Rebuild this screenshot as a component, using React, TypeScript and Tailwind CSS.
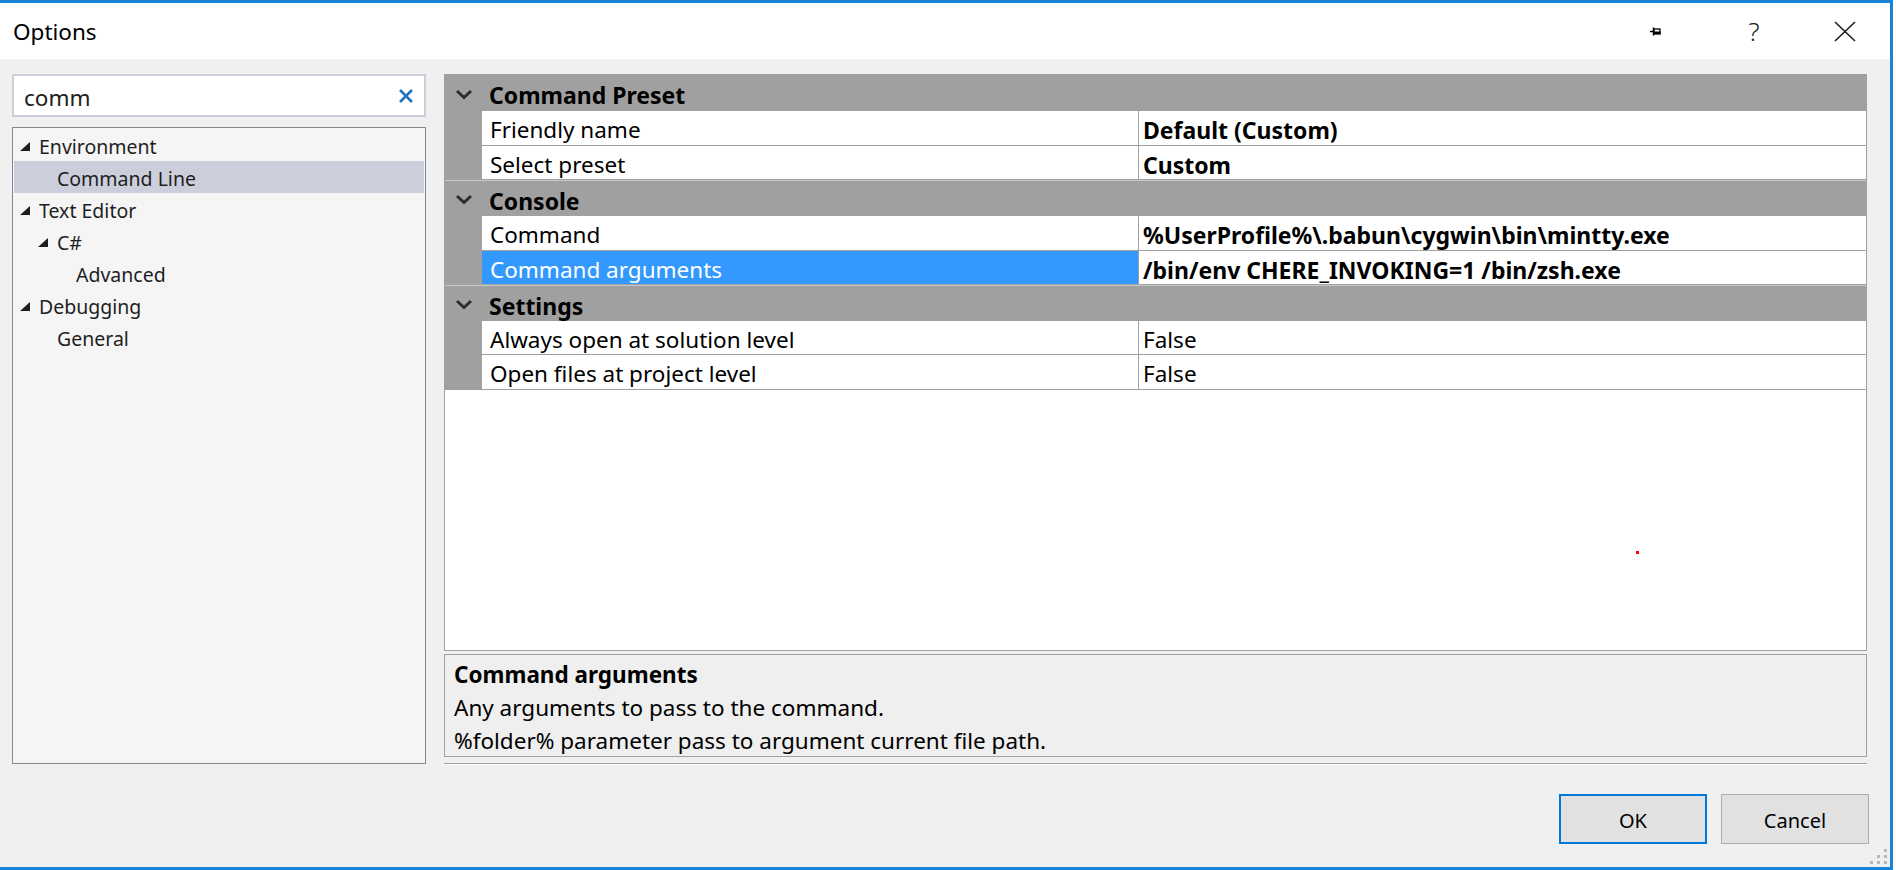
import React from "react";

type TreeItem = { label: string; level: number; expanded?: boolean; selected?: boolean };

const treeItems: TreeItem[] = [
  { label: "Environment", level: 0, expanded: true },
  { label: "Command Line", level: 1, selected: true },
  { label: "Text Editor", level: 0, expanded: true },
  { label: "C#", level: 1, expanded: true },
  { label: "Advanced", level: 2 },
  { label: "Debugging", level: 0, expanded: true },
  { label: "General", level: 1 },
];

const indent: Record<number, string> = {
  0: "pl-[6px]",
  1: "pl-[24px]",
  2: "pl-[43px]",
};

type Prop = { name: string; value: string; bold?: boolean; selected?: boolean; h: string };
type Category = { title: string; props: Prop[] };

const grid: Category[] = [
  {
    title: "Command Preset",
    props: [
      { name: "Friendly name", value: "Default (Custom)", bold: true, h: "h-[35px]" },
      { name: "Select preset", value: "Custom", bold: true, h: "h-[34px]" },
    ],
  },
  {
    title: "Console",
    props: [
      { name: "Command", value: "%UserProfile%\\.babun\\cygwin\\bin\\mintty.exe", bold: true, h: "h-[35px]" },
      { name: "Command arguments", value: "/bin/env CHERE_INVOKING=1 /bin/zsh.exe", bold: true, selected: true, h: "h-[34px]" },
    ],
  },
  {
    title: "Settings",
    props: [
      { name: "Always open at solution level", value: "False", h: "h-[34px]" },
      { name: "Open files at project level", value: "False", h: "h-[35px]" },
    ],
  },
];

export default function App() {
  return (
    <div className="h-[870px] w-[1896px] bg-white font-['Noto_Sans',sans-serif] text-[#1e1e1e]">
      <div className="relative flex h-full w-[1893px] flex-col border-t-[3px] border-r-[3px] border-b-[3px] border-[#1883d7] bg-[#f0f0f0]">
        <TitleBar />
        <div className="flex flex-1 pl-[12px] pt-[15px]">
          {/* left: search + tree */}
          <div className="flex w-[414px] flex-col">
            <div className="flex h-[43px] items-center border-2 border-[#cccedb] bg-white pl-[10px] pr-[10px]">
              <span className="flex-1 pt-[5px] text-[22.5px] leading-none">comm</span>
              <svg width="16" height="16" viewBox="0 0 16 16">
                <path d="M2 2 L14 14 M14 2 L2 14" stroke="#1e73be" strokeWidth="2.6" fill="none" />
              </svg>
            </div>
            <div className="mt-[10px] h-[637px] border border-[#828790] bg-[#f5f5f5] p-[1px]">
              {treeItems.map((item) => (
                <TreeRow key={item.label} item={item} />
              ))}
            </div>
          </div>

          {/* right: property grid */}
          <div className="ml-[18px] flex w-[1423px] flex-col">
            <div className="relative flex h-[577px] flex-col border border-[#a0a0a0] bg-white">
              {grid.map((cat, i) => (
                <div key={cat.title}>
                  <div
                    className={
                      "flex h-[36px] items-center bg-[#a0a0a0] " +
                      (i > 0 ? "border-t border-[#c8c8c8]" : "")
                    }
                  >
                    <div className="flex w-[37px] justify-center pl-[1px] pt-[2px]">
                      <svg width="18" height="11" viewBox="0 0 18 11">
                        <path d="M2 2 L9 8.5 L16 2" stroke="#2d2d2d" strokeWidth="3" fill="none" />
                      </svg>
                    </div>
                    <span className="pl-[7px] pt-[5px] text-[23px] leading-none font-bold text-black">
                      {cat.title}
                    </span>
                  </div>
                  {cat.props.map((p) => (
                    <div key={p.name} className={"flex " + p.h}>
                      <div className="w-[37px] bg-[#a0a0a0]" />
                      <div
                        className={
                          "flex w-[656px] items-center border-b border-[#a0a0a0] pl-[8px] pt-[5px] text-[22.5px] leading-none " +
                          (p.selected ? "bg-[#3399ff] text-white" : "bg-white text-black")
                        }
                      >
                        {p.name}
                      </div>
                      <div
                        className={
                          "flex flex-1 items-center border-b border-l border-[#a0a0a0] pl-[4px] pt-[5px] leading-none text-black " +
                          (p.bold ? "text-[23px] font-bold" : "text-[22.5px]")
                        }
                      >
                        {p.value}
                      </div>
                    </div>
                  ))}
                </div>
              ))}
              <div className="absolute left-[1191px] top-[476px] h-[3px] w-[3px] bg-[#ff0000]" />
            </div>

            {/* description */}
            <div className="mt-[3px] h-[103px] border border-[#a0a0a0] bg-[#efefef] pl-[9px] pt-[3px] text-[22.5px] leading-[33px] text-black">
              <div className="font-bold">Command arguments</div>
              <div>Any arguments to pass to the command.</div>
              <div>%folder% parameter pass to argument current file path.</div>
            </div>

            <div className="mt-[6px] h-[2px] border-t border-b border-t-[#a0a0a0] border-b-white" />

            <div className="mr-[-2px] mt-[29px] flex justify-end gap-[14px]">
              <button className="h-[50px] w-[148px] border-2 border-[#0078d7] bg-[#e1e1e1] pt-[3px] text-[20px] text-black">
                OK
              </button>
              <button className="h-[50px] w-[148px] border border-[#adadad] bg-[#e1e1e1] pt-[3px] text-[20px] text-black">
                Cancel
              </button>
            </div>
          </div>
        </div>

        {/* resize grip */}
        <svg className="absolute bottom-[2px] right-[3px]" width="17" height="16" viewBox="0 0 17 16">
          <rect x="14" y="0" width="3" height="3" fill="#b8b8b8" />
          <rect x="7" y="6" width="3" height="3" fill="#b8b8b8" />
          <rect x="14" y="6" width="3" height="3" fill="#b8b8b8" />
          <rect x="0" y="12" width="3" height="3" fill="#b8b8b8" />
          <rect x="7" y="12" width="3" height="3" fill="#b8b8b8" />
          <rect x="14" y="12" width="3" height="3" fill="#b8b8b8" />
        </svg>
      </div>
    </div>
  );
}

function TitleBar() {
  return (
    <div className="flex h-[56px] items-center bg-white">
      <span className="flex-1 pl-[13px] pt-[3px] text-[22.5px] leading-none text-black">Options</span>
      <div className="flex h-full w-[106px] items-center justify-center">
        <svg width="11" height="9" viewBox="0 0 11 9">
          <path d="M0 4.5 H3.5 M3.5 0.5 V8.5" stroke="#000" strokeWidth="1.5" fill="none" />
          <rect x="4" y="2" width="6" height="5" stroke="#000" strokeWidth="1.3" fill="none" />
          <rect x="4" y="4.5" width="6.5" height="2.5" fill="#000" />
        </svg>
      </div>
      <div className="flex h-full w-[92px] items-center justify-center text-[26px] font-light text-[#1e1e1e]">
        ?
      </div>
      <div className="flex h-full w-[90px] items-center justify-center">
        <svg width="22" height="21" viewBox="0 0 22 21">
          <path d="M1 1 L21 20 M21 1 L1 20" stroke="#1e1e1e" strokeWidth="1.6" fill="none" />
        </svg>
      </div>
    </div>
  );
}

function TreeRow({ item }: { item: TreeItem }) {
  return (
    <div
      className={
        "flex h-[32px] items-center text-[19.5px] leading-none " +
        indent[item.level] +
        (item.selected ? " bg-[#cccedb]" : "")
      }
    >
      <div className="flex w-[19px] items-center pt-[3px]">
        {item.expanded && (
          <svg width="10" height="9" viewBox="0 0 10 9">
            <polygon points="10,0 10,9 0,9" fill="#1e1e1e" />
          </svg>
        )}
      </div>
      <span className="pt-[3px]">{item.label}</span>
    </div>
  );
}
